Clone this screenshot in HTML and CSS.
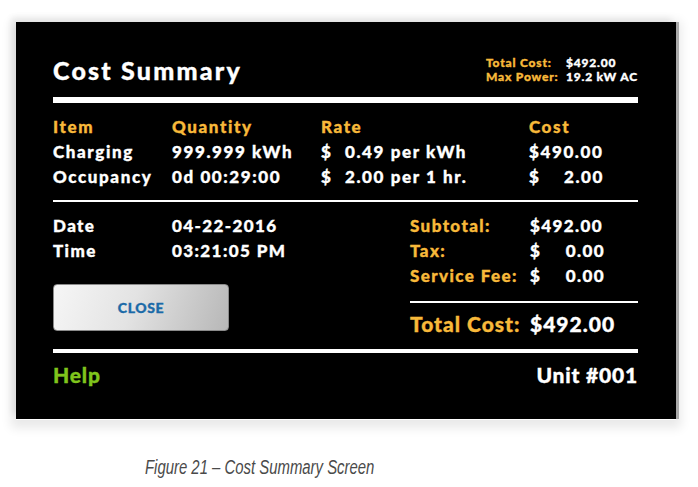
FILE: index.html
```html
<!DOCTYPE html>
<html>
<head>
<meta charset="utf-8">
<link rel="stylesheet" href="styles.css">
</head>
<body>
<div class="page">
  <div class="panel">
    <div class="head">
      <div class="title">Cost Summary</div>
      <div class="mini">
        <div class="mini-row"><span class="mini-label">Total Cost:</span><span class="mini-val">$492.00</span></div>
        <div class="mini-row"><span class="mini-label">Max Power:</span><span class="mini-val">19.2 kW AC</span></div>
      </div>
    </div>
    <div class="rule-thick"></div>
    <div class="items">
      <div class="hd">Item</div><div class="hd">Quantity</div><div class="hd">Rate</div><div class="hd">Cost</div>
      <div>Charging</div><div>999.999 kWh</div><div class="rate"><span class="dollar">$</span>0.49 per kWh</div><div>$490.00</div>
      <div>Occupancy</div><div>0d 00:29:00</div><div class="rate"><span class="dollar">$</span>2.00 per 1 hr.</div><div class="money"><span>$</span><span>2.00</span></div>
    </div>
    <div class="rule-thin"></div>
    <div class="lower">
      <div class="left">
        <div class="dt"><span class="dt-label">Date</span><span>04-22-2016</span></div>
        <div class="dt"><span class="dt-label">Time</span><span>03:21:05 PM</span></div>
        <div class="close-btn">CLOSE</div>
      </div>
      <div class="right">
        <div class="tot"><span class="tot-label">Subtotal:</span><span>$492.00</span></div>
        <div class="tot"><span class="tot-label">Tax:</span><span class="money"><span>$</span><span>0.00</span></span></div>
        <div class="tot"><span class="tot-label">Service Fee:</span><span class="money"><span>$</span><span>0.00</span></span></div>
        <div class="rule-sub"></div>
        <div class="grand"><span class="tot-label">Total Cost:</span><span>$492.00</span></div>
      </div>
    </div>
    <div class="rule-thick rule-bottom"></div>
    <div class="foot">
      <span class="help">Help</span>
      <span class="unit">Unit #001</span>
    </div>
  </div>
  <div class="caption"><span class="caption-text">Figure 21 – Cost Summary Screen</span></div>
</div>
</body>
</html>
```
FILE: styles.css
```css
html, body {
  margin: 0;
  padding: 0;
  background: #ffffff;
}
.page {
  padding: 22px 0 0 16px;
  width: 682px;
}
.panel {
  width: 660px;
  height: 397px;
  box-sizing: border-box;
  background: #000;
  padding: 33px 38px 0 37px;
  font-family: "Lato", "Liberation Sans", sans-serif;
  font-weight: 900;
  -webkit-text-stroke: 0.35px currentColor;
  color: #fff;
  box-shadow: 3px 0 0 #a9a9a9, 0 1px 0 #fff, 0 4px 10px 5px rgba(0,0,0,0.09), -5px -5px 6px rgba(0,0,0,0.06);
}
.head {
  display: flex;
  justify-content: space-between;
  align-items: flex-start;
  height: 30px;
}
.title {
  font-size: 25px;
  line-height: 30px;
  letter-spacing: 2.2px;
}
.mini {
  margin-top: 1px;
  width: 152px;
  font-size: 12px;
  line-height: 14px;
  letter-spacing: 0.8px;
}
.mini-row {
  display: flex;
}
.mini-label {
  color: #f8b93a;
  width: 80px;
}
.rule-thick {
  height: 6px;
  background: #fff;
  margin-top: 12px;
}
.items {
  display: grid;
  grid-template-columns: 119px 149px 208px 1fr;
  margin-top: 11px;
  font-size: 17px;
  line-height: 25px;
  letter-spacing: 1.6px;
}
.hd {
  color: #f8b93a;
}
.dollar {
  display: inline-block;
  width: 24px;
}
.money {
  display: flex;
  justify-content: space-between;
  width: 75px;
}
.rule-thin {
  height: 2px;
  background: #fff;
  margin-top: 11px;
}
.lower {
  display: flex;
  justify-content: space-between;
  margin-top: 11px;
  font-size: 17px;
  line-height: 25px;
  letter-spacing: 1.4px;
}
.left {
  width: 300px;
}
.dt {
  display: flex;
}
.dt-label {
  width: 119px;
}
.close-btn {
  margin-top: 21px;
  width: 176px;
  height: 47px;
  box-sizing: border-box;
  border-radius: 4px;
  background: linear-gradient(110deg, #f6f6f6 0%, #e3e3e3 45%, #b7b7b7 100%);
  border: 1px solid #8a8a8a;
  color: #1b6aa8;
  font-size: 14px;
  line-height: 45px;
  text-align: center;
  letter-spacing: 0.6px;
}
.right {
  width: 228px;
}
.tot {
  display: flex;
}
.tot-label {
  color: #f8b93a;
  width: 120px;
}
.rule-sub {
  height: 2px;
  background: #fff;
  margin-top: 13px;
}
.grand {
  display: flex;
  font-size: 21px;
  line-height: 28px;
  margin-top: 7px;
  letter-spacing: 1px;
}
.rule-bottom {
  height: 4px;
  margin-top: 11px;
}
.foot {
  display: flex;
  justify-content: space-between;
  margin-top: 8px;
  font-size: 21px;
  line-height: 28px;
  letter-spacing: 0.8px;
}
.help {
  color: #7fc41c;
}
.caption {
  margin-top: 37px;
  padding-left: 129px;
  font-family: "Liberation Sans", sans-serif;
  font-style: italic;
  font-size: 20px;
  line-height: 22px;
  color: #4a4a4a;
  white-space: nowrap;
}
.caption-text {
  display: inline-block;
  transform: scaleX(0.745);
  transform-origin: left center;
}
```
